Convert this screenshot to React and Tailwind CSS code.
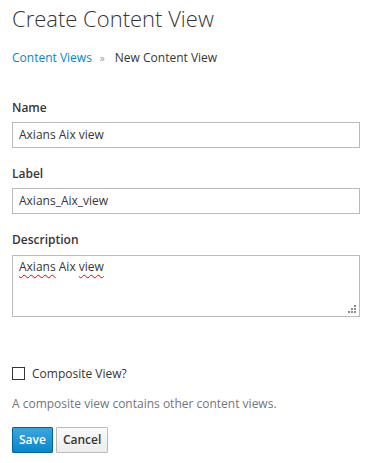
export default function App() {
  return (
    <div className="min-h-[463px] bg-white px-3 text-[12px] text-[#363636]" style={{ fontFamily: '"Open Sans", sans-serif' }}>
      <h1 className="pt-[2px] text-[22px] font-light leading-[32px]">Create Content View</h1>

      <div className="mt-[15px] flex items-center leading-[18px]">
        <a className="text-[#0088ce]">Content Views</a>
        <span className="ml-[8px] mr-[10px] text-[10px] text-[#9c9c9c]">»</span>
        <span>New Content View</span>
      </div>

      <form className="mt-[32px] w-[348px]">
        <label className="block font-semibold leading-[17px]">Name</label>
        <div className="mt-[6px] flex h-[26px] items-center border border-[#bbb] bg-white px-[6px]">Axians Aix view</div>

        <label className="mt-[17px] block font-semibold leading-[17px]">Label</label>
        <div className="mt-[6px] flex h-[26px] items-center border border-[#bbb] bg-white px-[6px]">Axians_Aix_view</div>

        <label className="mt-[17px] block font-semibold leading-[17px]">Description</label>
        <div className="relative mt-[7px] h-[62px] border border-[#bbb] bg-white px-[6px] py-[2px] leading-[18px]">
          <span className="underline decoration-red-600 decoration-wavy decoration-1 underline-offset-[3px]">Axians</span>{" "}
          Aix{" "}
          <span className="underline decoration-red-600 decoration-wavy decoration-1 underline-offset-[3px]">view</span>
          <svg className="absolute bottom-[2px] right-[2px]" width="9" height="9" viewBox="0 0 9 9" fill="#8a8a8a">
            <rect x="6" y="0" width="2" height="2" />
            <rect x="3" y="3" width="2" height="2" />
            <rect x="6" y="3" width="2" height="2" />
            <rect x="0" y="6" width="2" height="2" />
            <rect x="3" y="6" width="2" height="2" />
            <rect x="6" y="6" width="2" height="2" />
          </svg>
        </div>

        <div className="mt-[48px] flex items-center">
          <span className="h-[13px] w-[13px] border border-[#363636] bg-white" />
          <span className="ml-[7px] leading-[17px]">Composite View?</span>
        </div>

        <p className="mt-[13px] leading-[17px] text-[#72767b]">A composite view contains other content views.</p>

        <div className="mt-[15px] flex gap-[3px]">
          <button type="button" className="h-[26px] rounded-[1px] border border-[#00659c] bg-gradient-to-b from-[#39a5dc] to-[#0088ce] px-[6px] font-semibold text-white">Save</button>
          <button type="button" className="h-[26px] rounded-[1px] border border-[#bbb] bg-gradient-to-b from-[#fafafa] to-[#ededed] px-[6px] font-semibold text-[#363636]">Cancel</button>
        </div>
      </form>
    </div>
  );
}
